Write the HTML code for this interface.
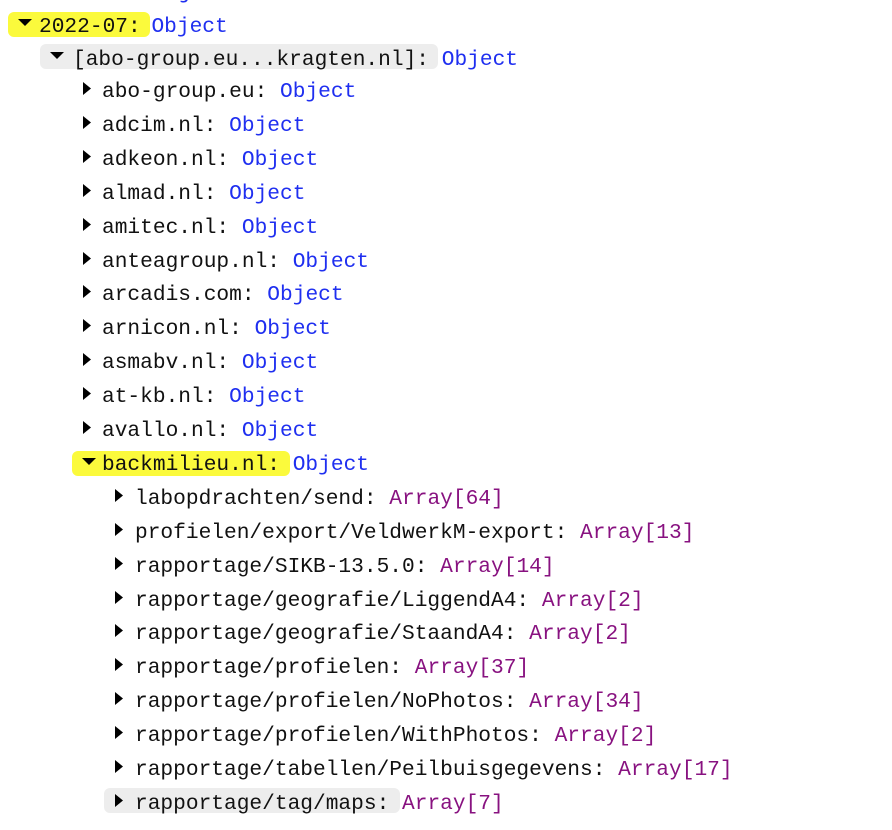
<!DOCTYPE html>
<html><head><meta charset="utf-8"><style>
body{margin:0;width:892px;height:830px;background:#fff;overflow:hidden;position:relative;font-family:"Liberation Mono","DejaVu Sans Mono",monospace;font-size:21.2px;}
.r{position:absolute;height:34px;line-height:34px;white-space:pre;color:#111;margin-top:3px;}
.o{color:#1f2ff0;}
.a{color:#881280;}
.hl{position:absolute;border-radius:6px;}
svg{position:absolute;}
</style></head><body>
<div class="r o" style="left:154px;top:-27px">Object</div>

<div class="hl" style="left:8px;top:12px;width:142px;height:25px;background:#fbfa3c"></div>
<div class="hl" style="left:40px;top:44px;width:398px;height:25px;background:#ededed"></div>
<div class="hl" style="left:72px;top:451px;width:218px;height:25px;background:#fbfa3c"></div>
<div class="hl" style="left:104px;top:788px;width:296px;height:25px;background:#ededed"></div>

<svg style="left:18px;top:19px" width="14" height="7"><path d="M0 0H14L7 7Z" fill="#000"/></svg>
<div class="r" style="left:39px;top:7px">2022-07: <span class="o" style="margin-left:-2px">Object</span></div>

<svg style="left:50px;top:52px" width="14" height="7"><path d="M0 0H14L7 7Z" fill="#000"/></svg>
<div class="r" style="left:73px;top:40px">[abo-group.eu...kragten.nl]: <span class="o">Object</span></div>

<div id="lvl2"></div>
<script>
var items=["abo-group.eu","adcim.nl","adkeon.nl","almad.nl","amitec.nl","anteagroup.nl","arcadis.com","arnicon.nl","asmabv.nl","at-kb.nl","avallo.nl"];
var h="";
for(var i=0;i<items.length;i++){var y=72+i*33.9;
h+='<svg style="left:83px;top:'+(y+10)+'px" width="8" height="13"><path d="M0 0V13L8 6.5Z" fill="#000"/></svg>';
h+='<div class="r" style="left:102px;top:'+y+'px">'+items[i]+': <span class="o">Object</span></div>';}
var y=72+11*33.9;
h+='<svg style="left:82px;top:'+(y+13)+'px" width="14" height="7"><path d="M0 0H14L7 7Z" fill="#000"/></svg>';
h+='<div class="r" style="left:102px;top:'+y+'px">backmilieu.nl: <span class="o">Object</span></div>';
var arr=[["labopdrachten/send","Array[64]"],["profielen/export/VeldwerkM-export","Array[13]"],["rapportage/SIKB-13.5.0","Array[14]"],["rapportage/geografie/LiggendA4","Array[2]"],["rapportage/geografie/StaandA4","Array[2]"],["rapportage/profielen","Array[37]"],["rapportage/profielen/NoPhotos","Array[34]"],["rapportage/profielen/WithPhotos","Array[2]"],["rapportage/tabellen/Peilbuisgegevens","Array[17]"],["rapportage/tag/maps","Array[7]"]];
for(var j=0;j<arr.length;j++){var yy=72+(12+j)*33.9;
h+='<svg style="left:115px;top:'+(yy+10)+'px" width="8" height="13"><path d="M0 0V13L8 6.5Z" fill="#000"/></svg>';
h+='<div class="r" style="left:135px;top:'+yy+'px">'+arr[j][0]+': <span class="a">'+arr[j][1]+'</span></div>';}
document.getElementById("lvl2").innerHTML=h;
</script>
</body></html>
